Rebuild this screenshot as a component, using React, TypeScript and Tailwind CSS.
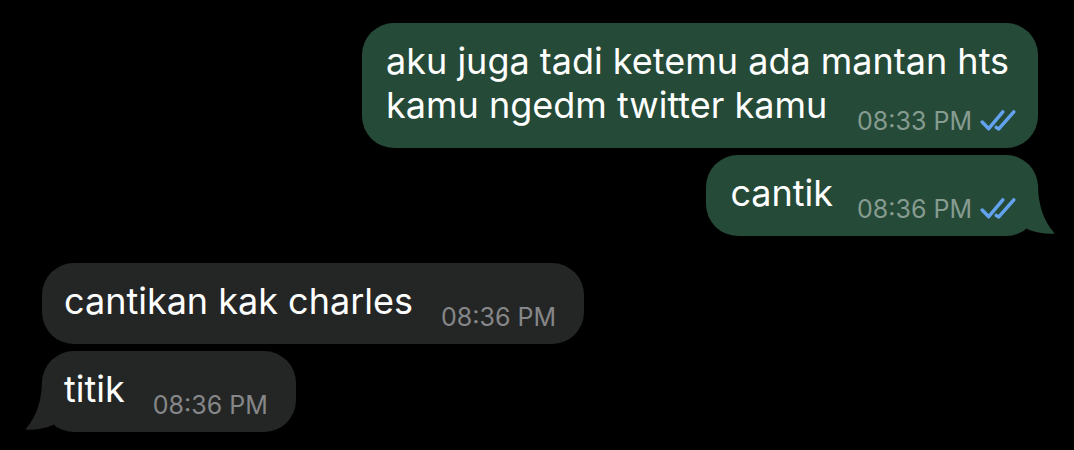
interface Message {
  id: number
  text: string
  time: string
  outgoing: boolean
}

const messageGroups: Message[][] = [
  [
    {
      id: 1,
      text: "aku juga tadi ketemu ada mantan hts kamu ngedm twitter kamu",
      time: "08:33 PM",
      outgoing: true,
    },
    { id: 2, text: "cantik", time: "08:36 PM", outgoing: true },
  ],
  [
    { id: 3, text: "cantikan kak charles", time: "08:36 PM", outgoing: false },
    { id: 4, text: "titik", time: "08:36 PM", outgoing: false },
  ],
]

function ReadTicks() {
  return (
    <svg
      className="w-9 h-[22px] text-[#62a2ee]"
      viewBox="0 0 36 22"
      fill="none"
      stroke="currentColor"
      strokeWidth="3.5"
      strokeLinecap="round"
      strokeLinejoin="round"
      role="img"
      aria-label="Read"
    >
      <path d="M2.200 12 L8.700 18.700 L22.800 1.900" />
      <path d="M16.300 17.400 L18.800 18.900 L33.800 1.900" />
    </svg>
  )
}

function Tail({ outgoing }: { outgoing: boolean }) {
  return (
    <svg
      className={`absolute bottom-0 w-[30px] h-[52px] ${
        outgoing ? "-right-4 text-[#264a38]" : "-left-4 -scale-x-100 text-[#242625]"
      }`}
      viewBox="0 0 30 52"
      fill="currentColor"
      aria-hidden="true"
    >
      <path d="M0 0 H14 C14 20 19 36 30 48.5 Q30.5 49.8 29 49.8 Q14 50 3 45 L0 40 Z" />
    </svg>
  )
}

function Bubble({ message, hasTail }: { message: Message; hasTail: boolean }) {
  const { text, time, outgoing } = message

  return (
    <li
      className={`relative flow-root max-w-[676px] rounded-[32px] pt-4 pb-[13px] ${
        outgoing ? "self-end bg-[#264a38] pl-6 pr-[22px]" : "self-start bg-[#242625] pl-[22px] pr-7"
      }`}
    >
      {hasTail && <Tail outgoing={outgoing} />}
      <p className="text-4xl leading-11 text-white">
        {text}
        <span
          className={`float-right mt-6 flex items-center gap-2 text-[25px] leading-7 ${
            outgoing ? "ml-6 text-[#869c90]" : "ml-7 text-[#868789]"
          }`}
        >
          <time>{time}</time>
          {outgoing && <ReadTicks />}
        </span>
      </p>
    </li>
  )
}

export default function App() {
  return (
    <main className="min-h-screen bg-black flex flex-col gap-[27px] pt-[23px] pb-4 pl-[42px] pr-9 font-['Inter','Liberation_Sans',sans-serif]">
      {messageGroups.map((group, index) => (
        <ul key={index} className="flex flex-col gap-[7px]">
          {group.map((message, i) => (
            <Bubble key={message.id} message={message} hasTail={i === group.length - 1} />
          ))}
        </ul>
      ))}
    </main>
  )
}
